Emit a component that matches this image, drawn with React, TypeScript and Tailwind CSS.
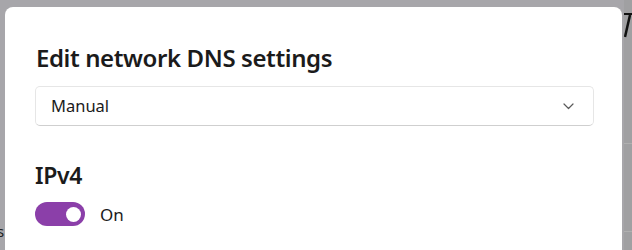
import React from "react";

export default function App() {
  return (
    <div
      className="relative flex h-[250px] w-[632px] overflow-hidden bg-[#a7a6aa]"
      style={{ fontFamily: '"Noto Sans", "Open Sans", sans-serif' }}
    >
      {/* left strip of background window */}
      <div className="relative w-[5px] shrink-0">
        <span className="absolute left-[-3px] top-[224px] text-[15px] leading-none text-[#222]">s</span>
      </div>

      {/* dialog */}
      <div className="mt-[7px] flex w-[617px] shrink-0 flex-col rounded-t-[8px] bg-white pl-[30px] pr-[28px] text-[#1b1b1b]">
        <h1 className="mt-[34px] pl-[1px] text-[24px] font-semibold leading-[33px] tracking-[-0.4px]">
          Edit network DNS settings
        </h1>
        <div className="mt-[12px] flex h-[40px] items-center justify-between rounded-[5px] border border-[#e6e6e6] border-b-[#cfcfcf] pl-[15px] pr-[19px]">
          <span className="text-[16.5px] leading-none">Manual</span>
          <svg width="11" height="7" viewBox="0 0 11 7" fill="none">
            <path d="M1 1 L5.5 5.5 L10 1" stroke="#5a5a5a" strokeWidth="1.2" strokeLinecap="round" strokeLinejoin="round" />
          </svg>
        </div>
        <h2 className="mt-[34px] text-[23px] font-semibold leading-[30px] tracking-[-0.3px]">IPv4</h2>
        <div className="mt-[12px] flex items-center gap-[15px]">
          <div className="flex h-[24px] w-[50px] items-center justify-end rounded-full bg-[#8b3fa9] pr-[4px]">
            <div className="h-[15px] w-[15px] rounded-full bg-white" />
          </div>
          <span className="text-[17px] leading-none">On</span>
        </div>
      </div>

      {/* right strip of background window */}
      <div className="relative ml-[2px] flex-1 bg-[#a0a0a2]">
        <div className="absolute left-0 top-[13px] h-[2px] w-full bg-[#111]" />
        <svg className="absolute left-0 top-[15px]" width="8" height="24" viewBox="0 0 8 24">
          <path d="M6 0 L1 22" stroke="#111" strokeWidth="2.5" />
        </svg>
        <div className="absolute left-0 top-[143px] h-px w-full bg-[#b0b0b0]" />
        <div className="absolute left-0 top-[231px] h-px w-full bg-[#b0b0b0]" />
      </div>
    </div>
  );
}
